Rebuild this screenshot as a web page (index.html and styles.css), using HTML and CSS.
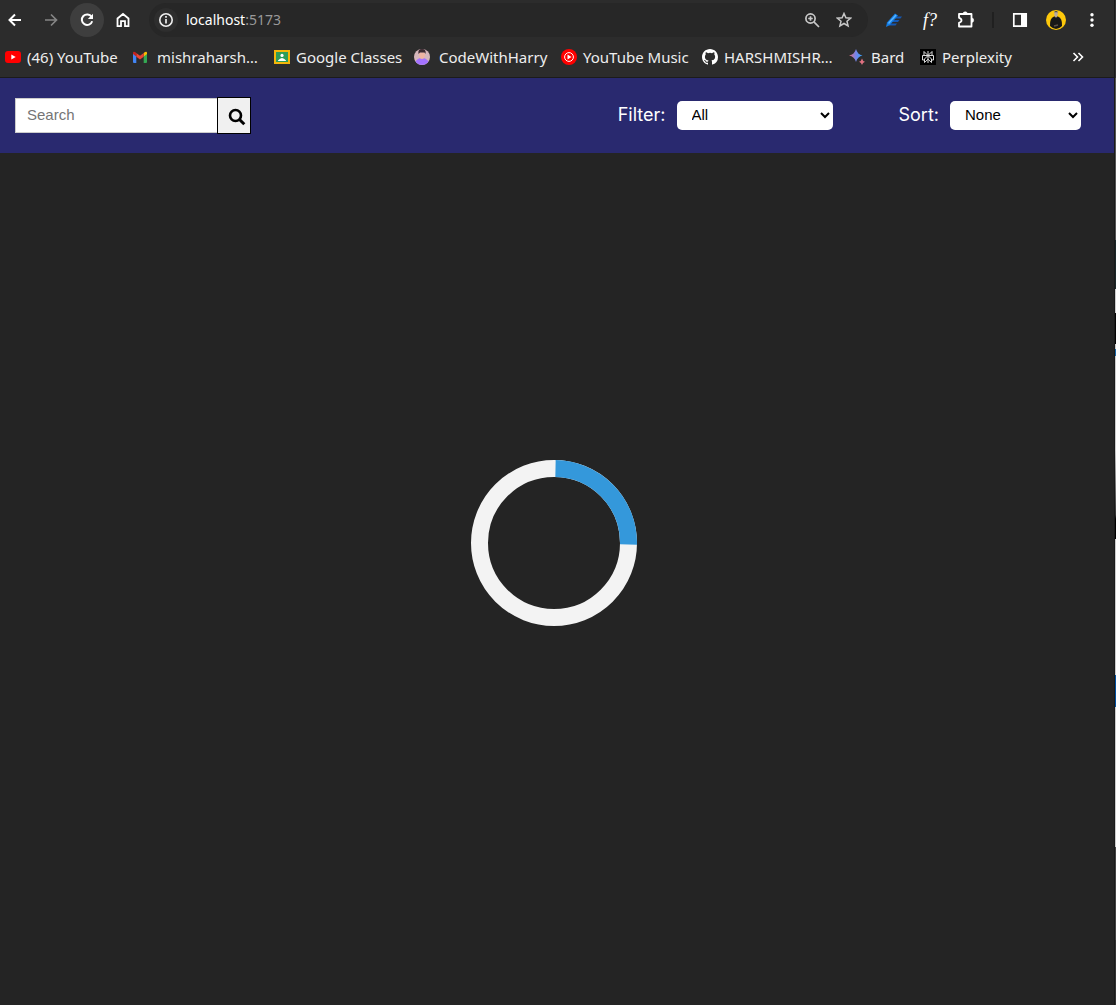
FILE: index.html
```html
<!DOCTYPE html>
<html lang="en">
<head>
<meta charset="utf-8">
<meta name="viewport" content="width=device-width, initial-scale=1">
<title>localhost:5173</title>
<link rel="stylesheet" href="styles.css">
</head>
<body>
<div class="window">
  <div class="toolbar">
    <div class="nav">
      <button class="nav-button" aria-label="Back"><svg width="16" height="16" viewBox="0 0 16 16" fill="none" stroke="#fff" stroke-width="2"><path d="M14 8H3M8 2.500L2.500 8L8 13.500"/></svg></button>
      <button class="nav-button" aria-label="Forward"><svg width="16" height="16" viewBox="0 0 16 16" fill="none" stroke="#858585" stroke-width="1.700"><path d="M2 8H13M8 2.500L13.500 8L8 13.500"/></svg></button>
      <button class="nav-button nav-button-active" aria-label="Reload"><svg width="16" height="16" viewBox="0 0 16 16" fill="none" stroke="#fff" stroke-width="2"><path d="M12.600 4.800A5.300 5.300 0 1 0 13.200 9.300"/><path d="M14 1.800V7H8.800z" fill="#fff" stroke="none"/></svg></button>
      <button class="nav-button" aria-label="Home"><svg width="16" height="16" viewBox="0 0 16 16" fill="none" stroke="#fff" stroke-width="1.800"><path d="M2.500 6.500L8 2L13.500 6.500V14.200H10V9.200H6V14.200H2.500z"/></svg></button>
    </div>
    <div class="address">
      <svg class="site-info" width="34" height="34" viewBox="0 0 34 34" fill="none"><circle cx="17" cy="17" r="12" fill="#2e2e2e"/><circle cx="17" cy="17" r="6.200" stroke="#eee" stroke-width="1.600"/><path d="M17 16V20.500M17 13V14.700" stroke="#eee" stroke-width="1.700"/></svg>
      <span class="url">localhost<span class="port">:5173</span></span>
      <button class="icon-button" aria-label="Zoom"><svg width="16" height="16" viewBox="0 0 16 16" fill="none" stroke="#c8c8c8" stroke-width="1.700"><circle cx="6.500" cy="6.500" r="4.600"/><path d="M9.900 9.900L15 15M4.200 6.500H8.800M6.500 4.200V8.800"/></svg></button>
      <button class="icon-button" aria-label="Bookmark this tab"><svg width="16" height="16" viewBox="0 0 16 16" fill="none" stroke="#c8c8c8" stroke-width="1.500"><path d="M8 1.500L9.900 5.800L14.600 6.200L11 9.300L12.100 14L8 11.500L3.900 14L5 9.300L1.400 6.200L6.100 5.800z"/></svg></button>
    </div>
    <div class="extensions">
      <button class="icon-button" aria-label="Editor extension"><svg width="18" height="16" viewBox="0 0 18 16"><path d="M9 4.500H17L15.500 6.500H9zM8 8H14.500L13 10H7zM5 11.500H12L10.500 13.500H4z" fill="#1558b4"/><path d="M1 15L2 10.500L10 1.500L13 3.500L5 13z" fill="#147de5"/><path d="M3.500 11.500L11 3" stroke="#55b4ff" stroke-width="1.500"/></svg></button>
      <button class="icon-button font-finder" aria-label="Font finder">f?</button>
      <button class="icon-button" aria-label="Extensions"><svg width="20" height="20" viewBox="0 0 20 20"><path d="M3 4H15.500V8V12V16.500H3V12.800Q5.500 12 5.500 10.200Q5.500 8.500 3 7.800z" fill="none" stroke="#fff" stroke-width="1.800" stroke-linejoin="round"/><path d="M7 4A2.200 2.200 0 0 1 11.400 4zM15.500 8A2.200 2.200 0 0 1 15.500 12.400z" fill="#fff" stroke="#fff" stroke-width=".6"/></svg></button>
      <span class="divider"></span>
      <button class="icon-button" aria-label="Side panel"><svg width="16" height="16" viewBox="0 0 16 16"><path d="M1.800 1.800H14.200V14.200H1.800z" fill="none" stroke="#fff" stroke-width="1.700"/><path d="M9 1H15V15H9z" fill="#fff"/></svg></button>
      <button class="icon-button" aria-label="Profile"><svg width="20" height="20" viewBox="0 0 20 20"><circle cx="10" cy="10" r="10" fill="#fdc80b"/><path d="M4 16Q3.500 8 8 6.500H12Q16.500 8 16 16Q13 19 10 19Q7 19 4 16z" fill="#171717"/><path d="M8.300 1.500H11.700V5L10.500 7.500H9.500L8.300 5z" fill="#b8aaa0"/><path d="M8 2.300Q10-.500 12 2.300z" fill="#444"/><path d="M8 16L12 15" stroke="#5c5148" stroke-width="1.500"/></svg></button>
      <button class="icon-button" aria-label="Menu"><svg width="16" height="16" viewBox="0 0 16 16" fill="#fff"><circle cx="8" cy="2.800" r="1.700"/><circle cx="8" cy="8" r="1.700"/><circle cx="8" cy="13.200" r="1.700"/></svg></button>
    </div>
  </div>

  <nav class="bookmarks" aria-label="Bookmarks">
    <a class="bookmark" href="#"><svg width="16" height="16" viewBox="0 0 16 16"><rect y="2" width="16" height="12" rx="3" fill="#f00"/><path d="M6.300 5.500L10.700 8L6.300 10.500z" fill="#fff"/></svg><span>(46) YouTube</span></a>
    <a class="bookmark bookmark-wide" href="#"><svg width="16" height="16" viewBox="0 0 16 16"><path d="M1 4L4.300 6.500V14H2Q1 14 1 13z" fill="#4285f4"/><path d="M11.700 6.500L15 4V13Q15 14 14 14H11.700z" fill="#34a853"/><path d="M11.700 4L13 3Q15 2 15 4V5L11.700 7.500z" fill="#fbbc04"/><path d="M4.300 4L8 6.700L11.700 4V7.700L8 10.500L4.300 7.700z" fill="#ea4335"/><path d="M1 5V4Q1 2 3 3L4.300 4V7.500z" fill="#c5221f"/></svg><span>mishraharsh…</span></a>
    <a class="bookmark" href="#"><svg width="16" height="16" viewBox="0 0 16 16"><path d="M0 1H16V15H0z" fill="#f4b70a"/><path d="M2 3H14V13H2z" fill="#2d9d59"/><circle cx="8" cy="6.400" r="1.600" fill="#fff"/><path d="M4 11.500Q8 6.500 12 11.500V12H4z" fill="#fff"/></svg><span>Google Classes</span></a>
    <a class="bookmark bookmark-wide" href="#"><svg width="16" height="16" viewBox="0 0 16 16"><circle cx="8" cy="8" r="8" fill="#d6b6bb"/><path d="M1.500 12.500Q4 8.500 8 9Q12 8.500 14.500 12.500A8 8 0 0 1 1.500 12.500z" fill="#a473ff"/><path d="M5.200 3.500H10.800V7Q10.500 10 8 10Q5.500 10 5.200 7z" fill="#efb4a3"/><path d="M4.500 5Q3.500 0 8 0Q12.500 0 11.500 5L10.500 3.500H6z" fill="#3b2930"/></svg><span>CodeWithHarry</span></a>
    <a class="bookmark" href="#"><svg width="16" height="16" viewBox="0 0 16 16"><circle cx="8" cy="8" r="8" fill="#f00"/><circle cx="8" cy="8" r="4.400" fill="none" stroke="#fff" stroke-width="1"/><path d="M6.500 5.500L10.500 8L6.500 10.500z" fill="#fff"/></svg><span>YouTube Music</span></a>
    <a class="bookmark" href="#"><svg width="16" height="16" viewBox="0 0 16 16"><path fill="#fff" d="M8 0C3.580 0 0 3.580 0 8c0 3.540 2.290 6.530 5.470 7.590.4.070.55-.17.55-.38 0-.19-.01-.82-.01-1.490-2.010.37-2.530-.49-2.690-.94-.09-.23-.48-.94-.82-1.130-.28-.15-.68-.52-.01-.53.63-.01 1.080.58 1.230.82.72 1.210 1.870.87 2.330.66.07-.52.28-.87.51-1.070-1.780-.2-3.640-.89-3.640-3.950 0-.87.31-1.590.82-2.150-.08-.2-.36-1.020.08-2.120 0 0 .67-.21 2.200.82a7.600 7.600 0 0 1 4 0c1.530-1.040 2.200-.82 2.200-.82.44 1.100.16 1.920.08 2.120.51.56.82 1.270.82 2.150 0 3.070-1.870 3.750-3.650 3.950.29.25.54.73.54 1.480 0 1.070-.01 1.930-.01 2.200 0 .21.15.46.55.38A8 8 0 0 0 16 8c0-4.420-3.580-8-8-8z"/></svg><span>HARSHMISHR…</span></a>
    <a class="bookmark" href="#"><svg width="16" height="16" viewBox="0 0 16 16"><defs><linearGradient id="spark"><stop stop-color="#e56c76"/><stop offset=".5" stop-color="#7884e8"/><stop offset="1" stop-color="#30a4ff"/></linearGradient></defs><path d="M7 0Q8.500 5.500 13.500 6.500Q8.500 7.500 7 13Q5.500 7.500 0 6.500Q5.500 5.500 7 0z" fill="url(#spark)"/><path d="M13 9.500Q13.600 12.100 16 12.700Q13.600 13.400 13 16Q12.400 13.400 10 12.700Q12.400 12.100 13 9.500z" fill="#df7181"/></svg><span>Bard</span></a>
    <a class="bookmark" href="#"><svg width="16" height="16" viewBox="0 0 16 16"><rect width="16" height="16" fill="#000"/><path d="M8 2V14M4 2.500L8 6.500L12 2.500V6.500H4zM8 6.500L4.500 10V13.500L8 10.200L11.500 13.500V10zM4.500 11H2.500V6.500H13.500V11H11.500" fill="none" stroke="#ddd" stroke-width="1"/></svg><span>Perplexity</span></a>
    <button class="icon-button more" aria-label="More bookmarks"><svg width="12" height="10" viewBox="0 0 12 10" fill="none" stroke="#fff" stroke-width="1.600"><path d="M1.500 1L5.500 5L1.500 9M6.500 1L10.500 5L6.500 9"/></svg></button>
  </nav>

  <header class="header">
    <form class="search" role="search">
      <input class="search-input" type="search" placeholder="Search" aria-label="Search">
      <button class="search-button" type="button" aria-label="Search"><svg width="18" height="18" viewBox="0 0 18 18" fill="none" stroke="#000"><circle cx="7.500" cy="7.500" r="5.500" stroke-width="2.600"/><path d="M11.500 11.500L16.300 16.300" stroke-width="3"/></svg></button>
    </form>
    <div class="controls">
      <div class="control">
        <label for="filter">Filter:</label>
        <select class="select select-filter" id="filter"><option>All</option></select>
      </div>
      <div class="control">
        <label for="sort">Sort:</label>
        <select class="select select-sort" id="sort"><option>None</option></select>
      </div>
    </div>
  </header>

  <main class="content">
    <svg class="spinner" role="img" aria-label="Loading" width="166" height="166" viewBox="0 0 166 166" fill="none" stroke-width="17"><circle cx="83" cy="83" r="74.500" stroke="#f3f3f3"/><path d="M84.500 8.500A74.500 74.500 0 0 1 157.500 84.500" stroke="#3498db"/></svg>
  </main>
</div>
<div class="desktop-edge"></div>
</body>
</html>
```
FILE: styles.css
```css
* {
  box-sizing: border-box;
}

body {
  display: flex;
  min-height: 100vh;
  margin: 0;
  background: #242424;
  color: #fff;
  font-family: Inter, sans-serif;
}

button {
  padding: 0;
  border: 0;
  background: none;
  color: inherit;
}

svg {
  display: block;
  flex: none;
}

.window {
  display: flex;
  flex: 1;
  flex-direction: column;
  min-width: 0;
}

/* Strip of the desktop that shows beside the window */
.desktop-edge {
  width: 2px;
  border-left: 1px solid #1a1a1a;
  background: linear-gradient(
    #333 0 78px, #555 78px 240px, #1b2728 240px 289px,
    #ccc 289px 313px, #050505 313px 344px, #ccc 344px 349px,
    #1767a8 349px 356px, #ccc 356px 450px, #333 515px, #000 519px 539px,
    #ccc 539px 675px, #0050a0 675px 707px, #ccc 707px 847px,
    #444 847px 940px, #333 940px);
}

.toolbar {
  display: flex;
  align-items: center;
  height: 40px;
  background: #2c2c2c;
}

.nav {
  display: flex;
  gap: 2px;
  margin-left: -2px;
  margin-right: 9px;
}

.nav-button {
  display: flex;
  align-items: center;
  justify-content: center;
  width: 34px;
  height: 34px;
  border-radius: 50%;
}

.nav-button-active {
  background: #3e3e3e;
}

.address {
  display: flex;
  flex: 1;
  align-items: center;
  height: 34px;
  padding-right: 16px;
  border-radius: 17px;
  background: #272727;
}

.url {
  flex: 1;
  margin-left: 3px;
  font: 14px/20px "Noto Sans", sans-serif;
}

.port {
  color: #999;
}

.icon-button {
  display: flex;
  align-items: center;
  justify-content: center;
}

.address .icon-button {
  margin-left: 16px;
}

.extensions {
  display: flex;
  align-items: center;
  gap: 16px;
  padding: 0 12px 0 16px;
}

.extensions .icon-button {
  width: 20px;
}

.font-finder {
  font: italic 18px/20px "Liberation Serif", serif;
}

.divider {
  width: 2px;
  height: 16px;
  background: #202020;
}

.bookmarks {
  display: grid;
  grid-template-columns: 127px 142px 140px 147px 141px 147px 71px 1fr auto;
  align-items: center;
  height: 38px;
  padding: 0 30px 4px 5px;
  border-bottom: 1px solid #1b1b1b;
  background: #2c2c2c;
}

.bookmark {
  display: flex;
  align-items: center;
  gap: 6px;
  color: #eee;
  font: 15px/20px "Noto Sans", sans-serif;
  text-decoration: none;
  white-space: nowrap;
}

.bookmark-wide {
  gap: 9px;
}

.header {
  display: flex;
  align-items: center;
  justify-content: space-between;
  height: 75px;
  padding: 0 33px 0 15px;
  background: #29296f;
}

.search {
  display: flex;
  align-items: center;
}

.search-input {
  width: 203px;
  height: 35px;
  padding: 0 11px 2px;
  border: 1px solid #ccc;
  border-radius: 0;
  background: #fff;
  font: 15px "Liberation Sans", sans-serif;
  appearance: none;
}

.search-input::placeholder {
  color: #757575;
}

.search-button {
  display: flex;
  align-items: center;
  justify-content: center;
  width: 34px;
  height: 37px;
  margin-left: -1px;
  padding: 3px 0 0 6px;
  border: 1px solid #000;
  background: #f0f0f0;
}

.controls {
  display: flex;
  gap: 66px;
}

.control {
  display: flex;
  align-items: center;
  gap: 11px;
  font-size: 18px;
  line-height: 28px;
}

.control label {
  padding-bottom: 2px;
}

.select {
  height: 29px;
  padding: 0 0 2px 11px;
  border: 0;
  border-radius: 5px;
  background: #fff;
  color: #000;
  font: 15px "Liberation Sans", sans-serif;
}

.select-filter {
  width: 156px;
}

.select-sort {
  width: 131px;
}

.content {
  display: flex;
  flex: 1;
  align-items: center;
  justify-content: center;
  padding: 0 6px 72px 0;
}
```
